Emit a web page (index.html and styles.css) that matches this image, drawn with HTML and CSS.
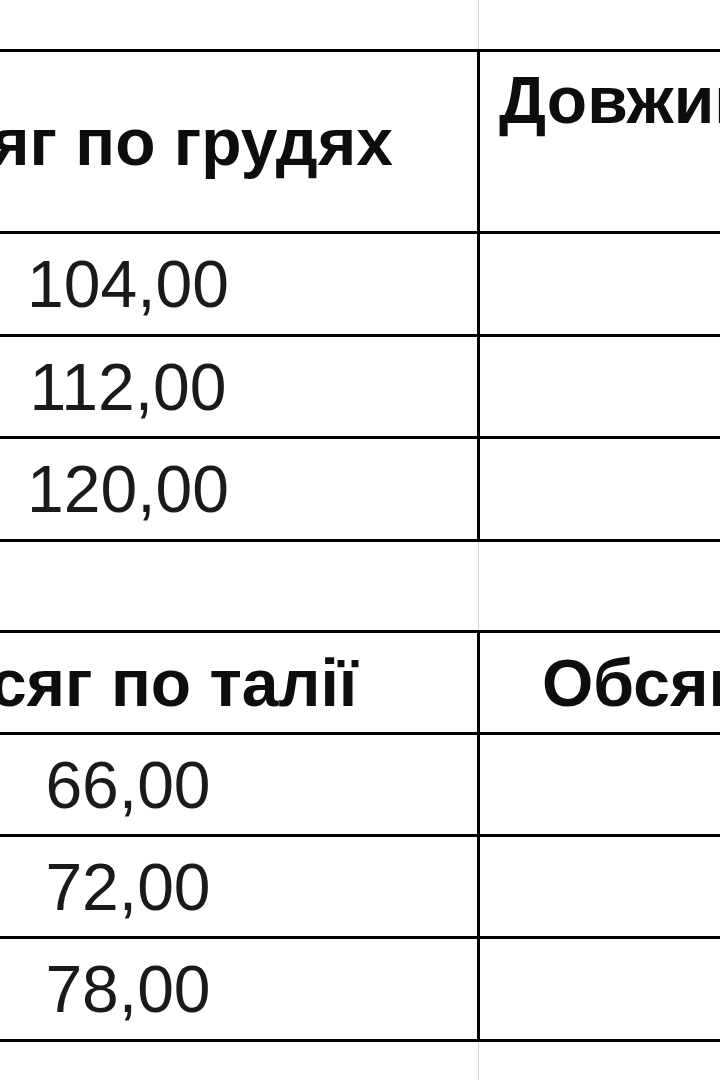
FILE: index.html
```html
<!DOCTYPE html>
<html lang="uk">
<head>
<meta charset="utf-8">
<title>Таблиця розмірів</title>
<link rel="stylesheet" href="styles.css">
</head>
<body>
<div class="sheet">
  <div class="gap gap-top"><div class="gridline"></div></div>

  <div class="table">
    <div class="row head head-tall">
      <div class="cell a"><span class="txt bold">Обсяг по грудях</span></div>
      <div class="cell b b-top"><span class="txt bold">Довжина виробу</span></div>
    </div>
    <div class="row r100">
      <div class="cell a"><span class="txt">104,00</span></div>
      <div class="cell b"></div>
    </div>
    <div class="row r99">
      <div class="cell a"><span class="txt">112,00</span></div>
      <div class="cell b"></div>
    </div>
    <div class="row r100">
      <div class="cell a"><span class="txt">120,00</span></div>
      <div class="cell b"></div>
    </div>
  </div>

  <div class="gap gap-mid"><div class="gridline"></div></div>

  <div class="table">
    <div class="row head r99">
      <div class="cell a"><span class="txt bold">Обсяг по талії</span></div>
      <div class="cell b b-mid"><span class="txt bold">Обсяг по стегнах</span></div>
    </div>
    <div class="row r99">
      <div class="cell a"><span class="txt">66,00</span></div>
      <div class="cell b"></div>
    </div>
    <div class="row r99">
      <div class="cell a"><span class="txt">72,00</span></div>
      <div class="cell b"></div>
    </div>
    <div class="row r100">
      <div class="cell a"><span class="txt">78,00</span></div>
      <div class="cell b"></div>
    </div>
  </div>

  <div class="gap gap-bottom"><div class="gridline"></div></div>
</div>
</body>
</html>
```

FILE: styles.css
```css
html, body {
  margin: 0;
  padding: 0;
  background: #ffffff;
}
body {
  width: 720px;
  height: 1080px;
  overflow: hidden;
  font-family: "Liberation Sans", Arial, sans-serif;
  color: #111111;
}
.sheet {
  width: 720px;
}
.gap {
  position: relative;
}
.gap-top { height: 49px; }
.gap-mid { height: 88px; }
.gap-bottom { height: 40px; }
.gridline {
  margin-left: 478px;
  width: 1px;
  height: 100%;
  background: #d4d4d4;
}
.table {
  margin-left: -221px;
  width: 1200px;
  border-top: 3px solid #000;
}
.row {
  display: flex;
  border-bottom: 3px solid #000;
}
.head-tall { height: 179px; }
.r100 { height: 100px; }
.r99 { height: 99px; }
.cell {
  display: flex;
  align-items: center;
  overflow: hidden;
}
.a {
  width: 698px;
  flex: 0 0 698px;
  justify-content: center;
  border-right: 3px solid #000;
}
.b {
  flex: 1;
}
.b-top {
  align-items: flex-start;
  padding-top: 15px;
  padding-left: 19px;
}
.b-mid {
  padding-left: 62px;
}
.txt {
  font-size: 66px;
  line-height: 1;
  white-space: nowrap;
  color: #1a1a1a;
}
.bold {
  font-weight: 700;
  color: #0d0d0d;
}
```
